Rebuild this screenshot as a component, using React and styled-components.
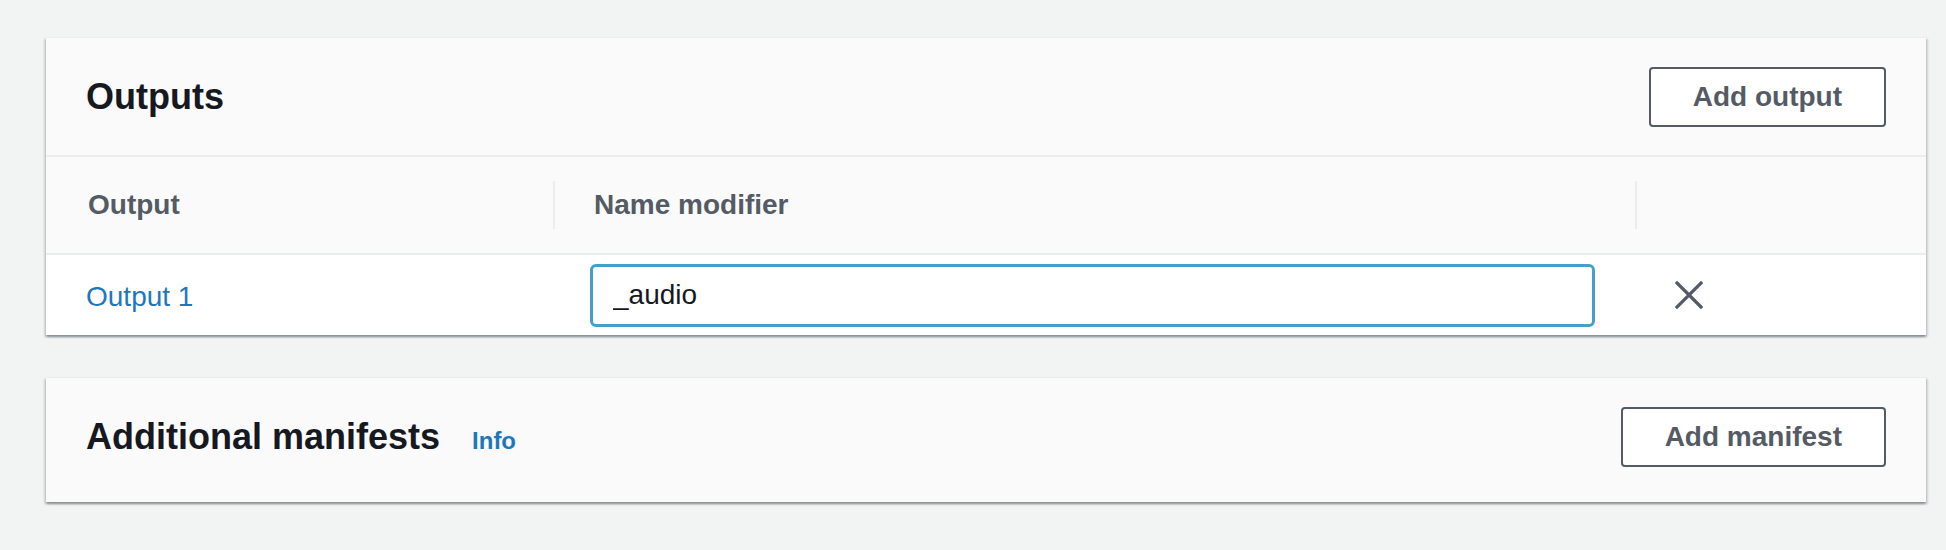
import React from "react";
import styled, { createGlobalStyle } from "styled-components";

const GlobalStyle = createGlobalStyle`
  html, body {
    margin: 0;
    padding: 0;
    background: #f2f3f3;
    font-family: "Liberation Sans", Arial, sans-serif;
  }
  * { box-sizing: border-box; }
`;

const Page = styled.div`
  display: flex;
  flex-direction: column;
  gap: 42px;
  padding: 37px 20px 48px 46px;
`;

const Card = styled.section`
  background: #fafafa;
  border-top: 1px solid #eaeded;
  box-shadow: 0 2px 2px 0 rgba(0, 28, 36, 0.3),
    2px 2px 2px 0 rgba(0, 28, 36, 0.12),
    -2px 2px 2px 0 rgba(0, 28, 36, 0.12);
`;

const CardHeader = styled.header`
  display: flex;
  align-items: center;
  justify-content: space-between;
  height: ${(p) => p.$height}px;
  padding: 0 40px ${(p) => p.$padBottom || 0}px 40px;
  border-bottom: ${(p) => (p.$divided ? "2px solid #eaeded" : "none")};
  box-sizing: content-box;
`;

const TitleGroup = styled.div`
  display: flex;
  align-items: baseline;
  gap: 32px;
`;

const Title = styled.h2`
  margin: 0;
  font-size: 36px;
  font-weight: 700;
  color: #16191f;
  line-height: 44px;
`;

const InfoLink = styled.a`
  font-size: 24px;
  font-weight: 700;
  color: #1f77bb;
  text-decoration: none;
`;

const Button = styled.button`
  height: 60px;
  padding: 0 42px;
  background: #ffffff;
  border: 2px solid #545b64;
  border-radius: 4px;
  font-family: "Liberation Sans", Arial, sans-serif;
  font-size: 28px;
  font-weight: 700;
  color: #545b64;
  cursor: pointer;
`;

const Table = styled.div`
  display: grid;
  grid-template-columns: 507px 1082px 1fr;
`;

const HeadCell = styled.div`
  display: flex;
  align-items: center;
  height: 98px;
  padding-left: ${(p) => (p.$sep ? 0 : 42)}px;
  border-bottom: 2px solid #eaeded;
  font-size: 28px;
  font-weight: 700;
  color: #545b64;

  ${(p) =>
    p.$sep &&
    `
    &::before {
      content: "";
      flex: none;
      width: 2px;
      height: 48px;
      margin-right: 39px;
      background: #eaeded;
    }
  `}
`;

const DataCell = styled.div`
  display: flex;
  align-items: center;
  height: 80px;
  background: #ffffff;
  padding: ${(p) => p.$pad || "0 40px"};
`;

const Link = styled.a`
  font-size: 28px;
  color: #1f77bb;
  text-decoration: none;
  margin-top: 3px;
`;

const TextInput = styled.input`
  width: 100%;
  height: 63px;
  padding: 0 20px;
  border: 3px solid #44a0c8;
  border-radius: 6px;
  background: #ffffff;
  font-family: "Liberation Sans", Arial, sans-serif;
  font-size: 28px;
  color: #16191f;
  outline: none;
`;

const IconButton = styled.button`
  display: flex;
  padding: 0;
  border: none;
  background: transparent;
  cursor: pointer;
`;

const CloseIcon = () => (
  <svg width="28" height="28" viewBox="0 0 28 28" fill="none">
    <path
      d="M2 2 L26 26 M26 2 L2 26"
      stroke="#545b64"
      strokeWidth="3.2"
      strokeLinecap="square"
    />
  </svg>
);

export default function App() {
  return (
    <>
      <GlobalStyle />
      <Page>
        <Card>
          <CardHeader $height={117} $divided>
            <Title>Outputs</Title>
            <Button>Add output</Button>
          </CardHeader>
          <Table>
            <HeadCell>Output</HeadCell>
            <HeadCell $sep>Name modifier</HeadCell>
            <HeadCell $sep />
            <DataCell>
              <Link href="#">Output 1</Link>
            </DataCell>
            <DataCell $pad="0 40px 0 37px">
              <TextInput defaultValue="_audio" />
            </DataCell>
            <DataCell>
              <IconButton aria-label="Remove">
                <CloseIcon />
              </IconButton>
            </DataCell>
          </Table>
        </Card>
        <Card>
          <CardHeader $height={118} $padBottom={6}>
            <TitleGroup>
              <Title>Additional manifests</Title>
              <InfoLink href="#">Info</InfoLink>
            </TitleGroup>
            <Button>Add manifest</Button>
          </CardHeader>
        </Card>
      </Page>
    </>
  );
}
